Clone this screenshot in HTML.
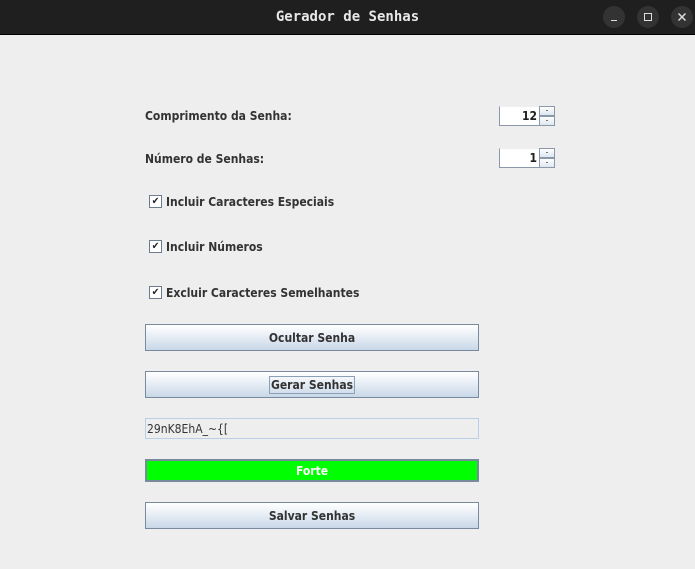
<!DOCTYPE html>
<html><head><style>
*{margin:0;padding:0;box-sizing:border-box}
body{width:695px;height:569px;background:#eeeeee;position:relative;overflow:hidden;font-family:"DejaVu Sans Condensed","DejaVu Sans",sans-serif;font-size:12px;font-weight:bold;color:#333}
.tb{position:absolute;left:0;top:0;width:695px;height:35px;background:#1f1f1f;border-bottom:1px solid #000}
.title{position:absolute;left:0;width:695px;top:9px;text-align:center;color:#e8e8e8;font-family:"DejaVu Sans Mono",monospace;font-size:14px;font-weight:bold}
.c{position:absolute;top:6px;width:22px;height:22px;border-radius:50%;background:#333}
.a{position:absolute;white-space:nowrap}
.btn{position:absolute;left:145px;width:334px;height:27px;border:1px solid #7a8a9e;background:linear-gradient(#ffffff 0%,#f0f4f9 30%,#c8d7e8 100%);text-align:center;line-height:26px}
.sp{position:absolute;left:499px;width:56px;height:20px}
.sp .f{position:absolute;left:0;top:0;width:41px;height:20px;background:#fff;border:1px solid #8a98aa;border-top-color:#eee;border-right:none;text-align:right;padding-right:3px;line-height:19px;color:#222}
.sp .u,.sp .d{position:absolute;left:40px;width:16px;height:10px;border:1px solid #8a98aa;background:linear-gradient(#fff,#dde6f0)}
.sp .u{top:0}.sp .d{top:10px}
.sp .u::after,.sp .d::after{content:"";position:absolute;left:6px;top:3px;width:2px;height:1px;background:#777}
.cb{position:absolute;left:149px;width:13px;height:13px;border:1px solid #6d7c8e;background:#fff;font-size:10px;line-height:11px;text-align:center;color:#222}
</style></head><body>
<div class="tb"><div class="title">Gerador de Senhas</div>
<div class="c" style="left:603px"><div style="position:absolute;left:8px;top:14px;width:6px;height:1px;background:#ddd"></div></div>
<div class="c" style="left:637px"><div style="position:absolute;left:7px;top:7px;width:8px;height:8px;border:1.5px solid #ddd"></div></div>
<div class="c" style="left:671px"><svg width="22" height="22" style="position:absolute;left:0;top:0"><path d="M7.5 7.5L14.5 14.5M14.5 7.5L7.5 14.5" stroke="#ddd" stroke-width="1.5"/></svg></div></div>

<div class="a" style="left:145px;top:109px">Comprimento da Senha:</div>
<div class="sp" style="top:106px"><div class="f">12</div><div class="u"></div><div class="d"></div></div>
<div class="a" style="left:145px;top:152px">Número de Senhas:</div>
<div class="sp" style="top:148px"><div class="f">1</div><div class="u"></div><div class="d"></div></div>

<div class="cb" style="top:195px">✔</div><div class="a" style="left:166px;top:195px">Incluir Caracteres Especiais</div>
<div class="cb" style="top:240px">✔</div><div class="a" style="left:166px;top:240px">Incluir Números</div>
<div class="cb" style="top:286px">✔</div><div class="a" style="left:166px;top:286px">Excluir Caracteres Semelhantes</div>

<div class="btn" style="top:324px">Ocultar Senha</div>
<div class="btn" style="top:371px"><span style="border:1px solid #8aa0b8;padding:1px 1px">Gerar Senhas</span></div>
<div style="position:absolute;left:145px;top:418px;width:334px;height:21px;border:1px solid #b8cfe6;background:#eeeeee;font-weight:normal;line-height:20px;padding-left:1px;color:#333">29nK8EhA_~{[</div>
<div style="position:absolute;left:145px;top:459px;width:334px;height:23px;border:2px solid #7a8a9e;background:#00ff00;color:#fff;text-align:center;line-height:20px">Forte</div>
<div class="btn" style="top:502px">Salvar Senhas</div>
</body></html>
